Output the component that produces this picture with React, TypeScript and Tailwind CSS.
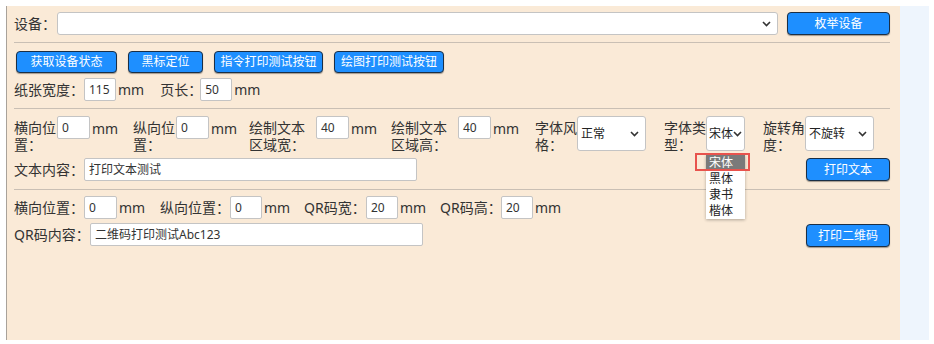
import React from 'react'

const font = { fontFamily: '"Noto Sans", "Noto Sans CJK SC", sans-serif' }

function Btn({ children, className = '' }: { children: React.ReactNode; className?: string }) {
  return (
    <button
      className={`h-[22px] shrink-0 whitespace-nowrap rounded-[4px] border border-[#1b2f45] bg-[#1e8fff] text-[12px] leading-none text-white shadow-[0_1px_1px_rgba(0,0,0,0.35)] ${className}`}
    >
      {children}
    </button>
  )
}

function Input({ value, className = '' }: { value: string; className?: string }) {
  return (
    <div
      className={`flex h-[23px] shrink-0 items-center whitespace-nowrap rounded-[2px] border border-[#c4c4c4] bg-white pl-[4px] text-[12px] text-[#333] ${className}`}
    >
      {value}
    </div>
  )
}

function Chevron() {
  return (
    <svg width="9" height="6" viewBox="0 0 9 6" className="shrink-0">
      <path d="M1 1 L4.5 4.5 L8 1" fill="none" stroke="#333" strokeWidth="1.6" />
    </svg>
  )
}

function FakeSelect({ value, className = '' }: { value: string; className?: string }) {
  return (
    <div
      className={`flex h-[35px] shrink-0 items-center justify-between whitespace-nowrap rounded-[3px] border border-[#c4c4c4] bg-white text-[12px] text-[#222] ${className}`}
    >
      <span>{value}</span>
      <Chevron />
    </div>
  )
}

function Label2({ text, className = '' }: { text: string; className?: string }) {
  return <div className={`mt-[3px] shrink-0 text-[14px] leading-[17px] text-[#333] ${className}`}>{text}</div>
}

function Lbl({ text, className = '' }: { text: string; className?: string }) {
  return <span className={`shrink-0 whitespace-nowrap ${className}`}>{text}</span>
}

export default function App() {
  return (
    <div className="flex h-[344px] w-[934px] bg-white" style={font}>
      <div className="relative mt-[6px] ml-[6px] h-[334px] w-[894px] shrink-0 border-l border-[#a9a29a] bg-[#faead7] pl-[7px] pr-[10px]">
        {/* device row */}
        <div className="mt-[6px] flex items-center text-[14px] text-[#333]">
          <Lbl text="设备：" className="w-[43px]" />
          <div className="flex h-[23px] w-[721px] shrink-0 items-center justify-end rounded-[3px] border border-[#c4c4c4] bg-white pr-[6px]">
            <Chevron />
          </div>
          <Btn className="ml-[9px] h-[23px] w-[103px]">枚举设备</Btn>
        </div>
        <div className="mt-[7px] border-t border-[#c9bfb4]" />

        {/* action buttons */}
        <div className="mt-[8px] flex items-center pl-[2px]">
          <Btn className="w-[101px]">获取设备状态</Btn>
          <Btn className="ml-[11px] w-[75px]">黑标定位</Btn>
          <Btn className="ml-[11px] w-[109px]">指令打印测试按钮</Btn>
          <Btn className="ml-[11px] w-[110px]">绘图打印测试按钮</Btn>
        </div>

        {/* paper */}
        <div className="mt-[5px] flex items-center text-[14px] text-[#333]">
          <Lbl text="纸张宽度：" className="w-[70px]" />
          <Input value="115" className="w-[32px]" />
          <Lbl text="mm" className="ml-[2px]" />
          <Lbl text="页长：" className="ml-[16px] w-[40px]" />
          <Input value="50" className="w-[32px]" />
          <Lbl text="mm" className="ml-[2px]" />
        </div>
        <div className="mt-[7px] border-t border-[#c9bfb4]" />

        {/* text settings */}
        <div className="mt-[7px] flex items-start text-[14px] text-[#333]">
          <Label2 text="横向位置：" className="w-[43px]" />
          <Input value="0" className="w-[33px]" />
          <Lbl text="mm" className="ml-[2px] mt-[2px] w-[41px]" />
          <Label2 text="纵向位置：" className="w-[43px]" />
          <Input value="0" className="w-[33px]" />
          <Lbl text="mm" className="ml-[2px] mt-[2px] w-[38px]" />
          <Label2 text="绘制文本区域宽：" className="w-[67px]" />
          <Input value="40" className="w-[33px]" />
          <Lbl text="mm" className="ml-[2px] mt-[2px] w-[40px]" />
          <Label2 text="绘制文本区域高：" className="w-[67px]" />
          <Input value="40" className="w-[33px]" />
          <Lbl text="mm" className="ml-[2px] mt-[2px] w-[42px]" />
          <Label2 text="字体风格：" className="w-[42px]" />
          <FakeSelect value="正常" className="w-[69px] pl-[3px] pr-[6px]" />
          <Label2 text="字体类型：" className="ml-[18px] w-[42px]" />
          <FakeSelect value="宋体" className="w-[39px] pl-[2px] pr-[2px]" />
          <Label2 text="旋转角度：" className="ml-[18px] w-[42px]" />
          <FakeSelect value="不旋转" className="w-[69px] pl-[3px] pr-[6px]" />
        </div>

        <div className="mt-[5px] flex items-center text-[14px] text-[#333]">
          <Lbl text="文本内容：" className="w-[70px]" />
          <Input value="打印文本测试" className="w-[333px]" />
          <div className="flex-1" />
          <Btn className="h-[23px] w-[84px]">打印文本</Btn>
        </div>
        <div className="mt-[8px] border-t border-[#c9bfb4]" />

        {/* QR settings */}
        <div className="mt-[6px] flex items-center text-[14px] text-[#333]">
          <Lbl text="横向位置：" className="w-[70px]" />
          <Input value="0" className="w-[33px]" />
          <Lbl text="mm" className="ml-[2px] w-[41px]" />
          <Lbl text="纵向位置：" className="w-[70px]" />
          <Input value="0" className="w-[32px]" />
          <Lbl text="mm" className="ml-[2px] w-[40px]" />
          <Lbl text="QR码宽：" className="w-[62px]" />
          <Input value="20" className="w-[32px]" />
          <Lbl text="mm" className="ml-[2px] w-[40px]" />
          <Lbl text="QR码高：" className="w-[61px]" />
          <Input value="20" className="w-[32px]" />
          <Lbl text="mm" className="ml-[2px]" />
        </div>

        <div className="mt-[3px] flex items-center text-[14px] text-[#333]">
          <Lbl text="QR码内容：" className="w-[76px]" />
          <Input value="二维码打印测试Abc123" className="w-[333px]" />
          <div className="flex-1" />
          <Btn className="mt-[2px] h-[23px] w-[84px]">打印二维码</Btn>
        </div>

        {/* open dropdown of 字体类型 */}
        <div className="absolute left-[699px] top-[149px] w-[39px] bg-white text-[12px] leading-[16px] text-[#222] shadow-[0_1px_3px_rgba(0,0,0,0.3)]">
          <div className="bg-[#7a7a7a] pl-[3px] text-white">宋体</div>
          <div className="pl-[3px]">黑体</div>
          <div className="pl-[3px]">隶书</div>
          <div className="pl-[3px]">楷体</div>
        </div>
        <div className="absolute left-[688px] top-[147px] h-[18px] w-[55px] border-2 border-[#e8534d]" />
      </div>
      <div className="mt-[6px] h-[334px] w-[29px] shrink-0 bg-[#eef5fd]" />
    </div>
  )
}
